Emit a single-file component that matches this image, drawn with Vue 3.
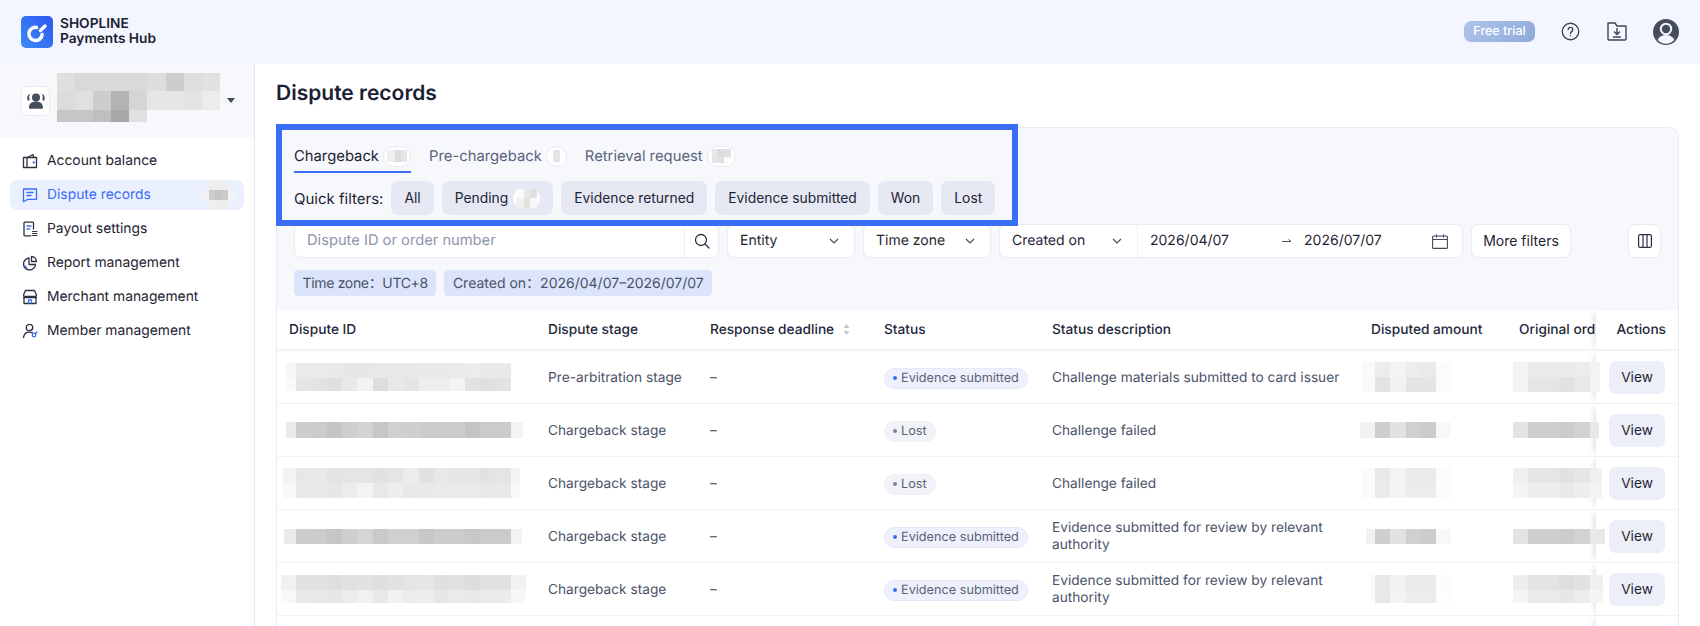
<script setup>
const gray = (v) => (v === 'ff' ? 'transparent' : '#' + v + v + v)
const m = (left, first, last, heights, rows, cell = 15.33) => ({
  left,
  heights,
  rows: rows.map((r) =>
    r.map((v, i) => ({
      w: i === 0 ? first : i === r.length - 1 ? last : cell,
      c: gray(v),
    }))
  ),
})

const accountMosaic = m(0, 18.1, 18.1, [18, 19, 12], [
  ['df', 'd9', 'd9', 'd9', 'd9', 'dd', 'cd', 'de', 'e1'],
  ['dc', 'e0', 'cd', 'b3', 'd5', 'e6', 'e6', 'e3', 'ec'],
  ['c6', 'c6', 'bf', 'a8', 'e0', 'ff', 'ff', 'ff', 'ff'],
], 18.1)

const navMosaic = m(0, 9, 6, [9, 10, 10], [
  ['ff', 'ee', 'ee', 'ee', 'ff'],
  ['f1', 'cc', 'c6', 'cc', 'f3'],
  ['ff', 'ee', 'ee', 'ee', 'ff'],
], 6.33)

const nav = [
  { label: 'Account balance', icon: 'wallet' },
  { label: 'Dispute records', icon: 'chat', active: true },
  { label: 'Payout settings', icon: 'doc' },
  { label: 'Report management', icon: 'pie' },
  { label: 'Merchant management', icon: 'store' },
  { label: 'Member management', icon: 'user' },
]

const tabs = [
  { label: 'Chargeback', active: true, w: 28, mos: m(0, 8, 6, [12], [['f0', 'dd', 'e6']], 6) },
  { label: 'Pre-chargeback', w: 21, mos: m(0, 7, 0, [12], [['e4']]) },
  { label: 'Retrieval request', w: 29, mos: m(0, 6, 7, [8, 6], [['e8', 'dc', 'e0'], ['e4', 'e0', 'fa']], 6) },
]

const filters = [
  { label: 'All' },
  { label: 'Pending', mos: m(0, 8, 7, [9, 10], [['fa', 'e8', 'e0'], ['f0', 'e2', 'f6']], 6) },
  { label: 'Evidence returned' },
  { label: 'Evidence submitted' },
  { label: 'Won' },
  { label: 'Lost' },
]

const descLong = 'Evidence submitted for review by relevant authority'

const rows = [
  {
    id: m(-3, 10, 15.33, [15, 13], [
      ['f6', 'ea', 'eb', 'e9', 'e7', 'e7', 'e8', 'e8', 'e8', 'e9', 'e9', 'ea', 'ec', 'e9', 'e9'],
      ['f9', 'e6', 'e3', 'df', 'e9', 'f2', 'de', 'e9', 'e5', 'ed', 'ed', 'f3', 'e2', 'e0', 'e3'],
    ]),
    stage: 'Pre-arbitration stage',
    status: 'Evidence submitted',
    on: true,
    desc: 'Challenge materials submitted to card issuer',
    amt: m(-9, 13, 15, [15, 15], [
      ['fa', 'ec', 'f4', 'ec', 'ea', 'fb'],
      ['fa', 'e3', 'f1', 'e4', 'e4', 'fb'],
    ]),
    ord: m(-6, 15.33, 10, [15, 15], [
      ['f3', 'eb', 'eb', 'eb', 'ec', 'f3'],
      ['f3', 'e5', 'e5', 'e2', 'e8', 'f4'],
    ]),
  },
  {
    id: m(-3, 10, 12, [16], [
      ['ea', 'cd', 'cc', 'c5', 'ce', 'd3', 'c6', 'd0', 'cf', 'cc', 'cc', 'cc', 'c4', 'cb', 'cb', 'f3'],
    ]),
    stage: 'Chargeback stage',
    status: 'Lost',
    desc: 'Challenge failed',
    amt: m(-11, 15, 15, [16], [['f2', 'cf', 'e2', 'd0', 'cc', 'f8']]),
    ord: m(-6, 15.33, 9, [16], [['e3', 'cf', 'cf', 'cc', 'd2', 'e8']]),
  },
  {
    id: m(-6, 13, 9, [15, 15], [
      ['f3', 'e7', 'e8', 'e3', 'e5', 'e5', 'e2', 'e5', 'ec', 'e2', 'e8', 'e6', 'e6', 'e2', 'e5', 'f4'],
      ['f8', 'e8', 'e9', 'e7', 'ec', 'f3', 'e8', 'ee', 'e8', 'e9', 'ea', 'ea', 'eb', 'e8', 'e9', 'f8'],
    ]),
    stage: 'Chargeback stage',
    status: 'Lost',
    desc: 'Challenge failed',
    amt: m(-9, 13, 15, [15, 15], [
      ['fa', 'e9', 'f3', 'ea', 'ea', 'fb'],
      ['fb', 'ea', 'f4', 'ec', 'ec', 'fc'],
    ]),
    ord: m(-6, 15.33, 12, [15, 15], [
      ['ef', 'e6', 'e6', 'e2', 'e6', 'f0'],
      ['f5', 'ed', 'ed', 'e9', 'ee', 'f4'],
    ]),
  },
  {
    id: m(-5, 12, 11, [15], [
      ['ea', 'cd', 'cc', 'c6', 'cf', 'd5', 'c9', 'd0', 'd0', 'c8', 'cc', 'cc', 'c8', 'cb', 'cb', 'f3'],
    ]),
    stage: 'Chargeback stage',
    status: 'Evidence submitted',
    on: true,
    desc: descLong,
    amt: m(-5, 9, 15, [15], [['f2', 'cf', 'e2', 'd0', 'cc', 'f8']]),
    ord: m(-6, 15.33, 15, [15], [['e3', 'cf', 'cf', 'cc', 'd2', 'e8']]),
  },
  {
    id: m(-8, 15, 15, [15, 13], [
      ['f1', 'e2', 'e1', 'de', 'e1', 'e2', 'df', 'e1', 'e5', 'e6', 'df', 'e1', 'dd', 'e1', 'e2', 'f2'],
      ['f8', 'e9', 'e8', 'e6', 'ec', 'f1', 'e8', 'f1', 'ec', 'ed', 'e6', 'ea', 'e8', 'ea', 'eb', 'f7'],
    ]),
    stage: 'Chargeback stage',
    status: 'Evidence submitted',
    on: true,
    desc: descLong,
    amt: m(-1, 5, 15, [15, 13], [
      ['fb', 'e8', 'f2', 'ea', 'ea', 'fc'],
      ['fb', 'e8', 'f3', 'ec', 'ec', 'fd'],
    ]),
    ord: m(-6, 15.33, 13, [15, 13], [
      ['ee', 'e3', 'e3', 'de', 'e2', 'f0'],
      ['f5', 'ea', 'ea', 'e7', 'ec', 'f5'],
    ]),
  },
]

const heads = ['Dispute ID', 'Dispute stage', 'Response deadline', 'Status', 'Status description', 'Disputed amount', 'Original ord']
</script>

<template>
  <div class="app">
    <header class="topbar">
      <div class="brand">
        <svg class="logo" viewBox="0 0 32 32" width="32" height="32">
          <defs>
            <linearGradient id="lg" x1="0" y1="1" x2="1" y2="0">
              <stop offset="0" stop-color="#3b8cf6" />
              <stop offset="1" stop-color="#2f55f0" />
            </linearGradient>
          </defs>
          <rect width="32" height="32" rx="5" fill="url(#lg)" />
          <path d="M15.5 11.400a6.600 6.600 0 1 0 5.600 7.100" fill="none" stroke="#fff" stroke-width="3.500" stroke-linecap="round" />
          <path d="M19.500 14.500l4.500-4.500" fill="none" stroke="#fff" stroke-width="3.400" stroke-linecap="round" />
        </svg>
        <div class="brand-text">
          <div>SHOPLINE</div>
          <div>Payments Hub</div>
        </div>
      </div>
      <div class="top-right">
        <span class="trial">Free trial</span>
        <svg class="ti-help" width="19" height="19" viewBox="0 0 20 20" fill="none" stroke="#3c4354" stroke-width="1.400">
          <circle cx="10" cy="10" r="8.700" />
          <path d="M7.600 8a2.400 2.400 0 1 1 3.600 2.100c-.8.5-1.200 1-1.200 1.900" stroke-linecap="round" />
          <circle cx="10" cy="14.500" r=".7" fill="#3c4354" stroke="none" />
        </svg>
        <svg class="ti-folder" width="20" height="20" viewBox="0 0 20 20" fill="none" stroke="#3c4354" stroke-width="1.400" stroke-linejoin="round" stroke-linecap="round">
          <path d="M1 2h7l2 3h8.400a.6.6 0 0 1 .6.6V18a1 1 0 0 1-1 1H2a1 1 0 0 1-1-1z" />
          <path d="M10 7.500v6M7.400 11l2.600 2.600 2.600-2.600M6.500 16h7" />
        </svg>
        <svg class="ti-avatar" width="26" height="26" viewBox="0 0 26 26">
          <circle cx="13" cy="13" r="13" fill="#454c5c" />
          <circle cx="13" cy="10" r="5.200" fill="none" stroke="#f3f6fe" stroke-width="2" />
          <path d="M4.600 21c1.600-3.600 4.600-5 8.400-5s6.800 1.400 8.400 5a11.500 11.500 0 0 1-16.800 0z" fill="#f3f6fe" />
        </svg>
      </div>
    </header>

    <div class="body">
      <aside class="sidebar">
        <div class="account">
          <div class="acc-icon">
            <svg width="20" height="18" viewBox="0 0 20 18" fill="#454c5c">
              <circle cx="10" cy="5.500" r="4" />
              <path d="M3 15.500c0-4 3-6 7-6s7 2 7 6c0 .8-.6 1.300-1.300 1.300H4.300c-.7 0-1.300-.5-1.300-1.300z" />
              <path d="M4.800 1.800C3 3 2.600 5.500 3.800 7.300L2.200 9C.2 6.300 1.400 2.300 4.800 1.800zM15.200 1.800c1.800 1.200 2.200 3.700 1 5.500L17.800 9c2-2.700.8-6.700-2.600-7.200z" />
            </svg>
          </div>
          <div class="mosaic acc-mosaic">
            <div v-for="(r, i) in accountMosaic.rows" :key="i" class="mrow" :style="{ height: accountMosaic.heights[i] + 'px' }">
              <i v-for="(c, j) in r" :key="j" :style="{ width: c.w + 'px', background: c.c }"></i>
            </div>
          </div>
          <span class="caret"></span>
        </div>
        <nav class="nav">
          <a v-for="item in nav" :key="item.label" class="nav-item" :class="{ active: item.active }">
            <svg class="nav-icon" width="16" height="16" viewBox="0 0 16 16" fill="none" stroke="currentColor" stroke-width="1.300" stroke-linejoin="round" stroke-linecap="round">
              <template v-if="item.icon === 'wallet'">
                <path d="M1.500 4.500h13v10h-13zM5 4.500v10" />
                <path d="M5.500 4.500 11 1.500l.8 3" />
                <circle cx="11.800" cy="9.500" r=".5" fill="#3a6df5" stroke="#3a6df5" />
              </template>
              <template v-else-if="item.icon === 'chat'">
                <path d="M1.500 2h13v10.300H6l-4.500 2.500z" />
                <path d="M5 5.500h6M5 8.500h4" />
              </template>
              <template v-else-if="item.icon === 'doc'">
                <path d="M11.500 8V2a.8.8 0 0 0-.8-.8H2.800A.8.8 0 0 0 2 2v12a.8.8 0 0 0 .8.8h6" />
                <path d="M5 5h4" stroke="#3a6df5" />
                <path d="M5 8h2.500" stroke="#3a6df5" />
                <path d="M10.500 10.500H15M10.500 12.500H15M10.500 14.500H15" stroke-width="1" />
              </template>
              <template v-else-if="item.icon === 'pie'">
                <path d="M7 3a6 6 0 1 0 6.500 6.500H7z" />
                <path d="M9.500 1.500a5.200 5.200 0 0 1 5 5H9.500z" />
                <path d="M2.800 10.500A4.500 4.500 0 0 0 5 13" stroke="#3a6df5" />
              </template>
              <template v-else-if="item.icon === 'store'">
                <path d="M3.500 1.500h9l2 4.500a1.500 1.500 0 0 1-1 1.500h-11a1.500 1.500 0 0 1-1-1.500z" />
                <path d="M2 8v6.500h12V8M1.500 8.500h13" />
                <path d="M6.500 14v-3h3v3" stroke="#3a6df5" />
              </template>
              <template v-else>
                <circle cx="7.500" cy="4.500" r="3.200" />
                <path d="M1.500 14.500c.5-3.500 3-5.300 6-5.300 1 0 2 .2 2.800.6" />
                <circle cx="12" cy="12" r="1.800" stroke="#3a6df5" />
                <path d="M13.300 10.700 15 9" stroke="#3a6df5" />
              </template>
            </svg>
            <span>{{ item.label }}</span>
            <div v-if="item.active" class="mosaic nav-mosaic">
              <div v-for="(r, i) in navMosaic.rows" :key="i" class="mrow" :style="{ height: navMosaic.heights[i] + 'px' }">
                <i v-for="(c, j) in r" :key="j" :style="{ width: c.w + 'px', background: c.c }"></i>
              </div>
            </div>
          </a>
        </nav>
      </aside>

      <main class="main">
        <h1 class="title">Dispute records</h1>
        <section class="card">
          <div class="callout"></div>
          <div class="toolbars">
            <div class="tabs">
              <div v-for="t in tabs" :key="t.label" class="tab" :class="{ active: t.active }">
                <span>{{ t.label }}</span>
                <span class="badge" :style="{ width: t.w + 'px' }">
                  <span class="mosaic">
                    <span v-for="(r, i) in t.mos.rows" :key="i" class="mrow" :style="{ height: t.mos.heights[i] + 'px' }">
                      <i v-for="(c, j) in r" :key="j" :style="{ width: c.w + 'px', background: c.c }"></i>
                    </span>
                  </span>
                </span>
              </div>
            </div>
            <div class="quick">
              <span class="quick-label">Quick filters:</span>
              <button v-for="f in filters" :key="f.label" class="chip">
                {{ f.label }}
                <span v-if="f.mos" class="chip-badge">
                  <span class="mosaic">
                    <span v-for="(r, i) in f.mos.rows" :key="i" class="mrow" :style="{ height: f.mos.heights[i] + 'px' }">
                      <i v-for="(c, j) in r" :key="j" :style="{ width: c.w + 'px', background: c.c }"></i>
                    </span>
                  </span>
                </span>
              </button>
            </div>
            <div class="filters">
              <div class="search ctl">
                <span class="ph lift">Dispute ID or order number</span>
                <span class="search-btn">
                  <svg width="16" height="16" viewBox="0 0 16 16" fill="none" stroke="#2b3142" stroke-width="1.300" stroke-linecap="round">
                    <circle cx="7" cy="7" r="5.500" />
                    <path d="M11 11l4 4" />
                  </svg>
                </span>
              </div>
              <div class="select ctl">
                <span class="lift">Entity</span>
                <svg class="chev" width="10" height="6" viewBox="0 0 10 6" fill="none" stroke="#444b5c" stroke-width="1.100"><path d="M1 1l4 4 4-4" /></svg>
              </div>
              <div class="select ctl">
                <span class="lift">Time zone</span>
                <svg class="chev" width="10" height="6" viewBox="0 0 10 6" fill="none" stroke="#444b5c" stroke-width="1.100"><path d="M1 1l4 4 4-4" /></svg>
              </div>
              <div class="date ctl">
                <div class="date-kind">
                  <span class="lift">Created on</span>
                  <svg class="chev" width="10" height="6" viewBox="0 0 10 6" fill="none" stroke="#444b5c" stroke-width="1.100"><path d="M1 1l4 4 4-4" /></svg>
                </div>
                <span class="d1 lift">2026/04/07</span>
                <svg class="arrow" width="10" height="6" viewBox="0 0 10 6" fill="none" stroke="#444b5c" stroke-width="1"><path d="M0 3.500h9M6.500 1.500 9 3.500" /></svg>
                <span class="d2 lift">2026/07/07</span>
                <svg class="cal" width="16" height="15" viewBox="0 0 16 15" fill="none" stroke="#444b5c" stroke-width="1.100">
                  <rect x=".6" y="2" width="14.800" height="12.400" rx="1" />
                  <path d="M.6 5.500h14.800M4.500 .5v3M11.500 .5v3" />
                </svg>
              </div>
              <button class="more ctl"><span class="lift">More filters</span></button>
              <button class="cols ctl">
                <svg width="14" height="14" viewBox="0 0 14 14" fill="none" stroke="#2b3142" stroke-width="1.200">
                  <rect x=".6" y=".6" width="12.800" height="12.800" rx="1.500" />
                  <path d="M5 .6v12.800M9 .6v12.800" />
                </svg>
              </button>
            </div>
            <div class="tags">
              <span class="tag tz">Time zone：UTC+8</span>
              <span class="tag">Created on：2026/04/07–2026/07/07</span>
            </div>
          </div>

          <div class="table">
            <div class="tr th">
              <div v-for="(h, i) in heads" :key="h" class="td">
                <span class="head-text">{{ h }}</span>
                <svg v-if="i === 2" class="sort" width="7" height="11" viewBox="0 0 7 11" fill="#c3c8d6"><path d="M3.500 0 6.500 4h-6zM3.500 11 .5 7h6z" /></svg>
              </div>
              <div class="td act">Actions</div>
            </div>
            <div v-for="(r, idx) in rows" :key="idx" class="tr">
              <div class="td">
                <div class="mosaic" :style="{ marginLeft: r.id.left + 'px' }">
                  <div v-for="(row, i) in r.id.rows" :key="i" class="mrow" :style="{ height: r.id.heights[i] + 'px' }">
                    <i v-for="(c, j) in row" :key="j" :style="{ width: c.w + 'px', background: c.c }"></i>
                  </div>
                </div>
              </div>
              <div class="td tx">{{ r.stage }}</div>
              <div class="td tx">–</div>
              <div class="td tx">
                <span class="status" :class="{ on: r.on }"><b class="dot"></b>{{ r.status }}</span>
              </div>
              <div class="td tx desc">{{ r.desc }}</div>
              <div class="td">
                <div class="mosaic" :style="{ marginLeft: r.amt.left + 'px' }">
                  <div v-for="(row, i) in r.amt.rows" :key="i" class="mrow" :style="{ height: r.amt.heights[i] + 'px' }">
                    <i v-for="(c, j) in row" :key="j" :style="{ width: c.w + 'px', background: c.c }"></i>
                  </div>
                </div>
              </div>
              <div class="td over">
                <div class="mosaic" :style="{ marginLeft: r.ord.left + 'px' }">
                  <div v-for="(row, i) in r.ord.rows" :key="i" class="mrow" :style="{ height: r.ord.heights[i] + 'px' }">
                    <i v-for="(c, j) in row" :key="j" :style="{ width: c.w + 'px', background: c.c }"></i>
                  </div>
                </div>
              </div>
              <div class="td act"><button class="view">View</button></div>
            </div>
            <div class="tr blank">
              <div class="td act"></div>
            </div>
          </div>
        </section>
      </main>
    </div>
  </div>
</template>

<style>
html,
body {
  margin: 0;
  height: 100%;
  overflow: hidden;
  background: #fff;
}
</style>

<style scoped>
.app {
  width: 1700px;
  height: 626px;
  overflow: hidden;
  display: flex;
  flex-direction: column;
  font-family: Inter, "Noto Sans CJK SC", sans-serif;
  font-size: 14px;
  color: #1f2433;
  text-rendering: geometricPrecision;
}
button {
  font: inherit;
  color: inherit;
  cursor: pointer;
}
.topbar {
  height: 64px;
  flex: none;
  background: #f3f6fe;
  display: flex;
  align-items: center;
  justify-content: space-between;
  padding: 0 21px;
}
.brand {
  display: flex;
  align-items: center;
  gap: 7px;
}
.brand-text {
  font-size: 13.7px;
  font-weight: 600;
  line-height: 15px;
  color: #1b2133;
}
.top-right {
  display: flex;
  align-items: center;
}
.trial {
  width: 71px;
  height: 21px;
  border-radius: 7px;
  background: linear-gradient(135deg, #aec4ed, #8fa9d9);
  color: #fff;
  font-size: 12.5px;
  font-weight: 500;
  display: flex;
  align-items: center;
  justify-content: center;
  margin-top: -1px;
}
.ti-help {
  margin-left: 26px;
  margin-top: -1px;
}
.ti-folder {
  margin-left: 27px;
  margin-top: -2px;
}
.ti-avatar {
  margin-left: 26px;
  margin-top: -1px;
}
.body {
  flex: 1;
  display: flex;
  min-height: 0;
}
.sidebar {
  width: 254px;
  flex: none;
  border-right: 1px solid #e5e8f4;
  background: #fff;
}
.account {
  height: 73px;
  background: #f7f8fc;
  display: flex;
  align-items: center;
  padding-left: 21px;
}
.acc-icon {
  width: 29px;
  height: 30px;
  box-sizing: border-box;
  background: #fff;
  border: 1px solid #e9ebf3;
  border-radius: 6px;
  display: flex;
  align-items: center;
  justify-content: center;
}
.acc-mosaic {
  margin-left: 7px;
  margin-top: -6px;
}
.caret {
  margin-left: 7px;
  border: 4px solid transparent;
  border-top: 5px solid #454c5c;
  border-bottom: 0;
}
.mosaic {
  display: flex;
  flex-direction: column;
  flex: none;
}
.mrow {
  display: flex;
}
.mrow i {
  display: block;
  height: 100%;
  flex: none;
}
.nav {
  padding: 9px 10px;
  display: flex;
  flex-direction: column;
  gap: 4px;
}
.nav-item {
  height: 30px;
  border-radius: 8px;
  display: flex;
  align-items: center;
  padding-left: 12px;
  color: #1f2433;
  font-size: 13.85px;
}
.nav-icon {
  margin-right: 9px;
  color: #2b3142;
}
.nav-item.active {
  background: #eaf0fe;
  color: #3a6df5;
}
.nav-item.active .nav-icon {
  color: #3a6df5;
}
.nav-mosaic {
  margin-left: auto;
  margin-right: 10px;
}
.main {
  flex: 1;
  min-width: 0;
  padding: 15px 21px 0;
}
.title {
  margin: 0 0 19px;
  font-size: 21px;
  line-height: 29px;
  font-weight: 600;
  color: #1b2133;
}
.card {
  position: relative;
  border: 1px solid #e8ebf5;
  border-bottom: 0;
  border-radius: 10px 10px 0 0;
  background: #f7f8fc;
}
.callout {
  position: absolute;
  left: -1px;
  top: -4px;
  width: 742px;
  height: 102px;
  box-sizing: border-box;
  border: 6px solid #3a6df5;
  pointer-events: none;
  z-index: 3;
}
.toolbars {
  padding: 0 17px;
}
.tabs {
  display: flex;
  gap: 18px;
  height: 45px;
  font-size: 14.8px;
}
.tab {
  display: flex;
  align-items: center;
  gap: 4px;
  height: 45px;
  box-sizing: border-box;
  padding-top: 13px;
  color: #5a6480;
  border-bottom: 2px solid transparent;
}
.tab.active {
  color: #1f2433;
  border-bottom-color: #3a6df5;
}
.badge {
  height: 21px;
  box-sizing: border-box;
  border-radius: 11px;
  background: #fff;
  border: 1px solid #e8eaf2;
  display: flex;
  align-items: center;
  justify-content: center;
}
.quick {
  display: flex;
  align-items: center;
  gap: 8px;
  margin-top: 8px;
  height: 34px;
}
.quick-label {
  font-size: 15px;
}
.chip {
  height: 34px;
  border: 0;
  border-radius: 7px;
  background: #e6e8f3;
  padding: 0 13px;
  font-size: 13.85px;
  display: flex;
  align-items: center;
  gap: 5px;
}
.chip-badge {
  width: 27px;
  height: 19px;
  border-radius: 10px;
  background: #fff;
  display: flex;
  align-items: center;
  justify-content: center;
}
.filters {
  display: flex;
  align-items: stretch;
  gap: 8px;
  margin-top: 9px;
  height: 34px;
}
.ctl {
  box-sizing: border-box;
  background: #fff;
  border: 1px solid #e8eaf4;
  border-radius: 7px;
  display: flex;
  align-items: center;
}
.lift {
  padding-bottom: 2px;
}
.search {
  width: 425px;
  justify-content: space-between;
  padding-left: 12px;
}
.ph {
  color: #8d94ab;
  font-size: 14.7px;
}
.search-btn {
  width: 33px;
  height: 100%;
  border-left: 1px solid #eef0f7;
  display: flex;
  align-items: center;
  justify-content: center;
}
.select {
  width: 128px;
  justify-content: space-between;
  padding: 0 15px 0 12px;
}
.date {
  width: 464px;
}
.date-kind {
  width: 138px;
  box-sizing: border-box;
  height: 100%;
  padding: 0 15px 0 12px;
  display: flex;
  align-items: center;
  justify-content: space-between;
  border-right: 1px solid #eef0f7;
}
.d1 {
  margin-left: 12px;
}
.arrow {
  margin-left: 53px;
}
.d2 {
  margin-left: 12px;
}
.cal {
  margin-left: 50px;
}
.more {
  width: 100px;
  justify-content: center;
  padding: 0;
}
.cols {
  width: 33px;
  justify-content: center;
  padding: 0;
  margin-left: auto;
}
.tags {
  display: flex;
  gap: 8px;
  margin-top: 12px;
  margin-bottom: 14px;
}
.tag {
  height: 26px;
  display: flex;
  align-items: center;
  padding: 0 8.5px;
  border-radius: 4px;
  background: #dbe4fb;
  color: #4a5268;
}
.tz {
  letter-spacing: -0.33px;
}
.table {
  background: #fff;
}
.tr {
  display: grid;
  grid-template-columns: 259px 162px 174px 168px 319px 148px 89px 82px;
  height: 53px;
  box-sizing: border-box;
  border-bottom: 1px solid #f0f2f8;
  color: #4a5268;
  font-size: 13.7px;
}
.tr.th {
  height: 41px;
  color: #22283a;
  font-weight: 500;
  border-bottom-width: 2px;
  border-bottom-color: #f3f4f9;
}
.td {
  display: flex;
  align-items: center;
  padding: 0 12px;
  min-width: 0;
  white-space: nowrap;
}
.tx {
  padding-top: 2px;
}
.th .td {
  overflow: hidden;
}
.th .td:nth-child(7) {
  padding-right: 0;
}
.head-text {
  flex: none;
}
.sort {
  margin-left: 9px;
  flex: none;
}
.desc {
  white-space: normal;
  line-height: 17px;
}
.over {
  position: relative;
  z-index: 2;
}
.act {
  justify-content: flex-end;
  background: #fff;
  box-shadow: -6px 0 6px -4px rgba(30, 40, 70, 0.14);
  position: relative;
  z-index: 1;
}
.blank {
  border-bottom: 0;
}
.blank .act {
  grid-column: 8;
}
.view {
  width: 56px;
  height: 33px;
  border: 0;
  border-radius: 7px;
  background: #eceff8;
  color: #1f2433;
  padding: 0;
  margin-right: 1px;
}
.status {
  display: inline-flex;
  align-items: center;
  height: 21px;
  box-sizing: border-box;
  padding: 0 8px;
  gap: 4px;
  border-radius: 11px;
  background: #f2f3f8;
  border: 1px solid #eef0f6;
  font-size: 12.7px;
  color: #5a6276;
}
.status.on {
  background: #eef1fc;
  border-color: #e4e8f7;
}
.dot {
  width: 4px;
  height: 4px;
  border-radius: 50%;
  background: #7c8498;
}
.on .dot {
  background: #3a6df5;
}
</style>
